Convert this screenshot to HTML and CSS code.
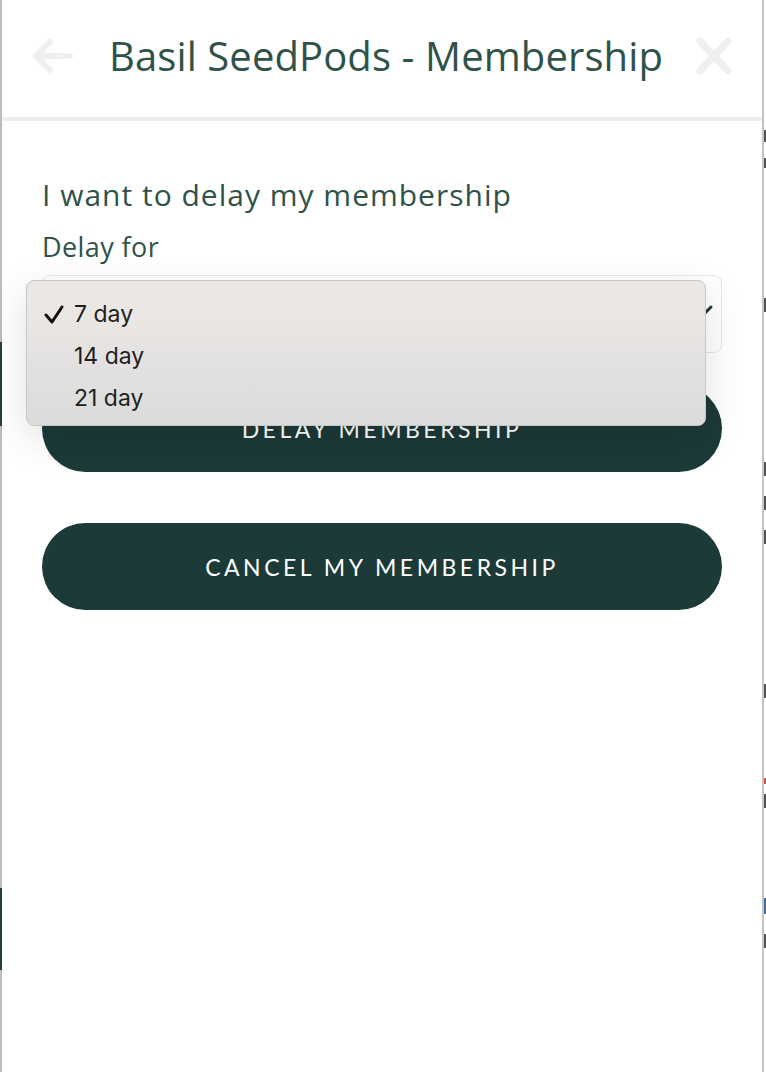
FILE: index.html
```html
<!DOCTYPE html>
<html>
<head>
    <title>Basil SeedPods - Membership</title>
    <link rel="stylesheet" href="styles.css">
</head>
<body>
    <div class="edge-left">
        <span class="edge-mark edge-mark-top"></span>
        <span class="edge-mark edge-mark-bottom"></span>
    </div>

    <div class="modal">
        <header class="modal-header">
            <svg class="header-icon" width="44" height="44" viewBox="0 0 44 44">
                <path d="M40 22 H8 M20 8 L6 22 L20 36" fill="none" stroke="#efefef" stroke-width="6" stroke-linecap="round" stroke-linejoin="round"/>
            </svg>
            <h1 class="modal-title">Basil SeedPods - Membership</h1>
            <svg class="header-icon" width="44" height="44" viewBox="0 0 44 44">
                <path d="M8 7 L36 37 M36 7 L8 37" fill="none" stroke="#efefef" stroke-width="7" stroke-linecap="round"/>
            </svg>
        </header>

        <div class="modal-body">
            <h2 class="section-title">I want to delay my membership</h2>
            <label class="field-label" for="delay">Delay for</label>

            <div class="select-wrap">
                <div class="select-box" id="delay">
                    <svg class="select-chevron" width="14" height="14" viewBox="0 0 14 14">
                        <path d="M3 11 L11 3" fill="none" stroke="#1c3a38" stroke-width="3" stroke-linecap="round"/>
                    </svg>
                </div>

                <!-- native picker, open -->
                <ul class="select-menu">
                    <li class="menu-item">
                        <svg class="check" width="20" height="20" viewBox="0 0 20 20">
                            <path d="M2 10 L8 17 L18 2" fill="none" stroke="#111111" stroke-width="3" stroke-linecap="round" stroke-linejoin="round"/>
                        </svg>
                        7 day
                    </li>
                    <li class="menu-item">14 day</li>
                    <li class="menu-item">21 day</li>
                </ul>
            </div>

            <button class="pill-button delay-button">Delay membership</button>
            <button class="pill-button">Cancel my membership</button>
        </div>
    </div>

    <!-- slice of the page behind the panel -->
    <div class="edge-right">
        <span class="edge-bit bit-1"></span>
        <span class="edge-bit bit-2"></span>
        <span class="edge-bit bit-3"></span>
        <span class="edge-bit bit-4"></span>
        <span class="edge-bit bit-5"></span>
        <span class="edge-bit bit-6"></span>
        <span class="edge-bit bit-7"></span>
        <span class="edge-bit bit-8"></span>
        <span class="edge-bit bit-9"></span>
        <span class="edge-bit bit-10"></span>
        <span class="edge-bit bit-11"></span>
    </div>
</body>
</html>
```

FILE: styles.css
```css
body {
    margin: 0;
    display: flex;
    height: 1072px;
    overflow: hidden;
    background-color: #ffffff;
    font-family: "Open Sans", "Noto Sans", sans-serif;
    color: #2f5249;
}

.edge-left {
    width: 2px;
    flex-shrink: 0;
    background-color: #bdbdbd;
    position: relative;
}

.edge-mark {
    position: absolute;
    left: 0;
    width: 2px;
    background-color: #213f3b;
}

.edge-mark-top {
    top: 342px;
    height: 84px;
}

.edge-mark-bottom {
    top: 888px;
    height: 82px;
}

.modal {
    width: 760px;
    flex-shrink: 0;
    background-color: #ffffff;
    border-right: 2px solid #c4c4c4;
}

.modal-header {
    height: 121px;
    border-bottom: 4px solid #eeeeee;
    display: flex;
    align-items: center;
    justify-content: space-between;
    padding: 0 26px 6px 28px;
    box-sizing: border-box;
}

.header-icon {
    flex-shrink: 0;
}

.modal-title {
    margin: 0 0 0 6px;
    font-size: 40px;
    font-weight: 400;
    color: #2f5249;
    letter-spacing: 0.1px;
}

.modal-body {
    padding: 56px 40px 0 40px;
}

.section-title {
    margin: 0;
    font-size: 30px;
    font-weight: 400;
    line-height: 36px;
    letter-spacing: 1px;
}

.field-label {
    display: block;
    margin-top: 18px;
    font-size: 27px;
    line-height: 32px;
    letter-spacing: 0.4px;
}

.select-wrap {
    position: relative;
    margin-top: 12px;
}

.select-box {
    height: 76px;
    border: 1px solid #e6e6e6;
    border-radius: 8px;
    position: relative;
}

.select-chevron {
    position: absolute;
    right: 7px;
    top: 28px;
}

.select-menu {
    position: absolute;
    left: -16px;
    top: 5px;
    width: 680px;
    height: 146px;
    box-sizing: border-box;
    margin: 0;
    padding: 12px 0 0 47px;
    list-style: none;
    border: 1px solid #c9c7c5;
    border-radius: 8px;
    background: linear-gradient(#ece7e4 0%, #e9e6e4 30%, #dadbdb 100%);
    box-shadow: 0 12px 40px rgba(0, 0, 0, 0.12);
    font-family: "Inter", "Liberation Sans", sans-serif;
    font-size: 23px;
    color: #1f1f1f;
}

.menu-item {
    height: 42px;
    line-height: 42px;
    position: relative;
}

.check {
    position: absolute;
    left: -30px;
    top: 12px;
}

.pill-button {
    display: block;
    width: 680px;
    height: 87px;
    border: none;
    border-radius: 44px;
    background-color: #1c3a38;
    color: #ffffff;
    font-family: "Lato", "Noto Sans", sans-serif;
    font-size: 23px;
    letter-spacing: 3.5px;
    text-transform: uppercase;
    margin-top: 51px;
    cursor: pointer;
}

.delay-button {
    margin-top: 32px;
}

.edge-right {
    width: 2px;
    display: flex;
    flex-direction: column;
    padding-top: 130px;
}

.edge-bit {
    display: block;
    width: 2px;
    height: 14px;
    background-color: #555555;
}

.bit-1 { margin-top: 0; height: 12px; }
.bit-2 { margin-top: 16px; height: 10px; }
.bit-3 { margin-top: 130px; }
.bit-4 { margin-top: 150px; }
.bit-5 { margin-top: 20px; }
.bit-6 { margin-top: 20px; }
.bit-7 { margin-top: 140px; }
.bit-8 { margin-top: 80px; height: 6px; background-color: #d9534f; }
.bit-9 { margin-top: 10px; }
.bit-10 { margin-top: 90px; height: 16px; background-color: #3a6ea5; }
.bit-11 { margin-top: 20px; }
```
